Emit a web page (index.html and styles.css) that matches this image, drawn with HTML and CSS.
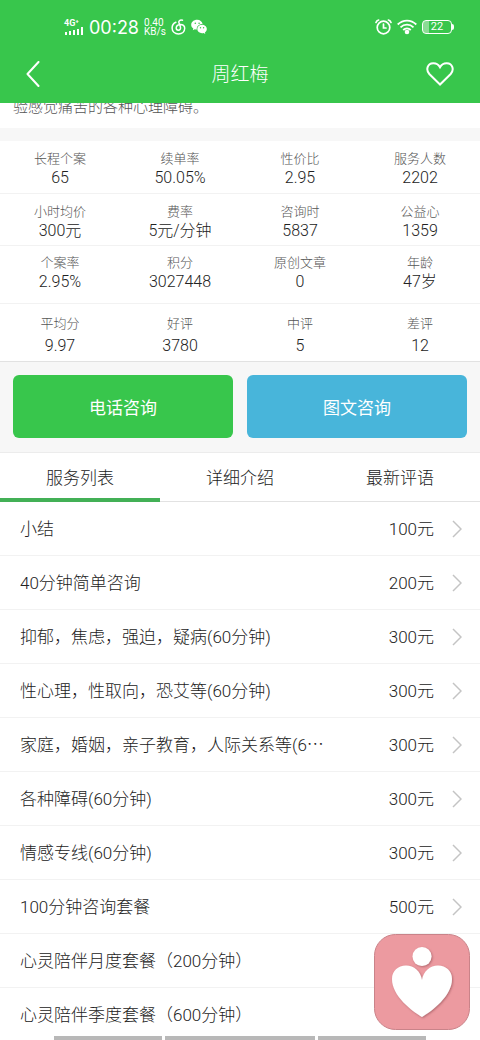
FILE: index.html
```html
<!DOCTYPE html>
<html lang="zh-CN">
<head>
<meta charset="utf-8">
<meta name="viewport" content="width=device-width, initial-scale=1">
<title>周红梅</title>
<link rel="stylesheet" href="styles.css">
</head>
<body>
<div class="app">
  <header class="header">
    <div class="status">
      <div class="status-group">
        <div class="signal">
          <span class="signal-type">4G⁺</span>
          <svg width="20" height="8" viewBox="0 0 20 8" fill="#fff" aria-hidden="true"><rect x="1" y="5" width="2" height="3"/><rect x="5" y="4" width="2" height="4"/><rect x="9" y="3" width="2" height="5"/><rect x="13" y="2" width="2" height="6"/><rect x="17" y="0" width="2" height="8"/></svg>
        </div>
        <span class="clock">00:28</span>
        <div class="speed"><span>0.40</span><span>KB/s</span></div>
        <svg width="15" height="16" viewBox="0 0 15 16" fill="none" stroke="#fff" stroke-width="1.500" stroke-linecap="round" aria-hidden="true"><path d="M11.500 1.300C10 .6 8 1.200 7.800 2.900C7.700 4.200 9.300 6.300 9.500 8.500C9.700 10.300 8.800 11.300 7.400 11.300C6.100 11.300 5.200 10.400 5.200 9.100C5.200 7.100 7 5.600 9.200 5.400C11.900 5.200 13.700 7 13.700 9.300C13.700 12.600 11 14.900 7.500 14.900C3.800 14.900 1.100 12.400 1.100 9C1.100 6.300 2.500 4.200 4.900 3.200"/></svg>
        <svg width="16" height="16" viewBox="0 0 16 16" aria-hidden="true"><path fill="#fff" d="M6.200.8C2.800.8.200 3 .2 5.800c0 1.600.8 2.900 2.100 3.800l-.5 1.700 2-1c.7.200 1.300.3 2 .3-.6-3.200 2-5.700 5.800-5.700C11.100 2.500 8.900.8 6.200.8z"/><path fill="#fff" d="M15.800 10c0-2.300-2.200-4.200-4.800-4.200S6.300 7.700 6.300 10s2.100 4.200 4.700 4.200c.6 0 1.100-.1 1.600-.2l1.700.9-.4-1.500c1.200-.8 1.900-2 1.900-3.400z"/><g fill="#38c64c"><circle cx="4.300" cy="4.200" r=".8"/><circle cx="8.100" cy="4.200" r=".8"/><circle cx="9.500" cy="8.800" r=".7"/><circle cx="12.600" cy="8.800" r=".7"/></g></svg>
      </div>
      <div class="status-group">
        <svg width="17" height="16" viewBox="0 0 17 16" fill="none" stroke="#fff" stroke-width="1.700" stroke-linecap="round" aria-hidden="true"><circle cx="8.500" cy="8.500" r="6.300"/><path d="M8.500 5v4H11M1 3.500C1.400 2.300 2.400 1.300 3.600 1M16 3.500C15.600 2.300 14.600 1.300 13.400 1"/></svg>
        <svg width="20" height="16" viewBox="0 0 20 16" fill="none" stroke="#fff" stroke-width="1.800" aria-hidden="true"><path d="M.7 5.500C6 .2 14 .2 19.300 5.500M3.500 8.300C7.200 4.700 12.800 4.700 16.500 8.300M6.200 11C8.400 8.900 11.600 8.900 13.800 11"/><circle cx="10" cy="13" r="2.300" fill="#fff" stroke="none"/></svg>
        <div class="battery"><span class="battery-body">22</span><span class="battery-tip"></span></div>
      </div>
    </div>
    <div class="nav">
      <button class="nav-button" type="button" aria-label="返回"><svg width="14" height="26" viewBox="0 0 14 26" fill="none" stroke="#fff" stroke-width="2" stroke-linecap="round" stroke-linejoin="round"><path d="M12.500 1L1.500 13L12.500 25"/></svg></button>
      <h1 class="title">周红梅</h1>
      <button class="nav-button" type="button" aria-label="收藏"><svg width="28" height="24" viewBox="0 0 28 24" fill="none" stroke="#fff" stroke-width="2"><path d="M14 22.500L3.300 12C-.4 7.900 1.300 1.400 7.200 1.200C10.300 1.100 12.600 2.600 14 5.200C15.400 2.600 17.700 1.100 20.800 1.200C26.700 1.400 28.400 7.900 24.700 12Z"/></svg></button>
    </div>
  </header>

  <main class="content">
    <section class="intro"><p class="intro-text">验感觉痛苦的各种心理障碍。</p></section>

    <section class="stats">
      <dl class="stat-row">
        <div><dt>长程个案</dt><dd>65</dd></div>
        <div><dt>续单率</dt><dd>50.05%</dd></div>
        <div><dt>性价比</dt><dd>2.95</dd></div>
        <div><dt>服务人数</dt><dd>2202</dd></div>
      </dl>
      <dl class="stat-row stat-row-compact">
        <div><dt>小时均价</dt><dd>300元</dd></div>
        <div><dt>费率</dt><dd>5元/分钟</dd></div>
        <div><dt>咨询时</dt><dd>5837</dd></div>
        <div><dt>公益心</dt><dd>1359</dd></div>
      </dl>
      <dl class="stat-row stat-row-deep">
        <div><dt>个案率</dt><dd>2.95%</dd></div>
        <div><dt>积分</dt><dd>3027448</dd></div>
        <div><dt>原创文章</dt><dd>0</dd></div>
        <div><dt>年龄</dt><dd>47岁</dd></div>
      </dl>
      <dl class="stat-row stat-row-rating">
        <div><dt>平均分</dt><dd>9.97</dd></div>
        <div><dt>好评</dt><dd>3780</dd></div>
        <div><dt>中评</dt><dd>5</dd></div>
        <div><dt>差评</dt><dd>12</dd></div>
      </dl>
    </section>

    <div class="actions">
      <button class="action action-call" type="button">电话咨询</button>
      <button class="action action-text" type="button">图文咨询</button>
    </div>

    <div class="tabs" role="tablist">
      <button class="tab tab-active" type="button" role="tab" aria-selected="true">服务列表</button>
      <button class="tab" type="button" role="tab" aria-selected="false">详细介绍</button>
      <button class="tab" type="button" role="tab" aria-selected="false">最新评语</button>
    </div>

    <ul class="services">
      <li><a class="service" href="#"><span class="name">小结</span><span class="price">100元</span><svg class="chevron" viewBox="0 0 10 18"><path d="M1 1L9 9L1 17"/></svg></a></li>
      <li><a class="service" href="#"><span class="name">40分钟简单咨询</span><span class="price">200元</span><svg class="chevron" viewBox="0 0 10 18"><path d="M1 1L9 9L1 17"/></svg></a></li>
      <li><a class="service" href="#"><span class="name">抑郁，焦虑，强迫，疑病(60分钟)</span><span class="price">300元</span><svg class="chevron" viewBox="0 0 10 18"><path d="M1 1L9 9L1 17"/></svg></a></li>
      <li><a class="service" href="#"><span class="name">性心理，性取向，恐艾等(60分钟)</span><span class="price">300元</span><svg class="chevron" viewBox="0 0 10 18"><path d="M1 1L9 9L1 17"/></svg></a></li>
      <li><a class="service" href="#"><span class="name">家庭，婚姻，亲子教育，人际关系等(6<span class="more">…</span></span><span class="price">300元</span><svg class="chevron" viewBox="0 0 10 18"><path d="M1 1L9 9L1 17"/></svg></a></li>
      <li><a class="service" href="#"><span class="name">各种障碍(60分钟)</span><span class="price">300元</span><svg class="chevron" viewBox="0 0 10 18"><path d="M1 1L9 9L1 17"/></svg></a></li>
      <li><a class="service" href="#"><span class="name">情感专线(60分钟)</span><span class="price">300元</span><svg class="chevron" viewBox="0 0 10 18"><path d="M1 1L9 9L1 17"/></svg></a></li>
      <li><a class="service" href="#"><span class="name">100分钟咨询套餐</span><span class="price">500元</span><svg class="chevron" viewBox="0 0 10 18"><path d="M1 1L9 9L1 17"/></svg></a></li>
      <li><a class="service" href="#"><span class="name">心灵陪伴月度套餐（200分钟）</span></a></li>
      <li><a class="service" href="#"><span class="name">心灵陪伴季度套餐（600分钟）</span></a></li>
    </ul>
  </main>

  <button class="float" type="button" aria-label="心理咨询">
    <svg width="96" height="96" viewBox="0 0 96 96">
      <defs><filter id="shade" x="-20%" y="-20%" width="140%" height="140%"><feDropShadow dx="1" dy="1" stdDeviation="1" flood-color="#8c4a50" flood-opacity=".6"/></filter></defs>
      <rect x=".5" y=".5" width="95" height="95" rx="21" fill="#ec9aa0" stroke="#c98389"/>
      <g fill="#fff" filter="url(#shade)"><circle cx="48" cy="22.500" r="9.500"/><path d="M48 83C38 77 18 62 18 45C18 37 24 31.500 32 31.500C40 31.500 46.500 37 48 46C49.500 37 56 31.500 64 31.500C72 31.500 78 37 78 45C78 62 58 77 48 83Z"/></g>
    </svg>
  </button>
  <div class="gesture" aria-hidden="true"><span></span><span class="gesture-home"></span><span></span></div>
</div>
</body>
</html>
```
FILE: styles.css
```css
* { box-sizing: border-box; }

body,
h1,
p,
dl,
dd,
ul {
  margin: 0;
  padding: 0;
}

body {
  font-family: Roboto, "Noto Sans CJK SC", sans-serif;
  font-weight: 300;
  color: #222;
  background: #fff;
}

button {
  border: 0;
  padding: 0;
  background: none;
  font: inherit;
  color: inherit;
}

svg { display: block; flex: none; }

.app {
  display: flex;
  flex-direction: column;
  height: 100vh;
  overflow: hidden;
}

/* Header */
.header {
  flex: none;
  background: #38c64c;
  color: #fff;
}

.status {
  display: flex;
  justify-content: space-between;
  align-items: center;
  height: 44px;
  padding: 10px 26px 0 64px;
  font-weight: 400;
}

.status-group {
  display: flex;
  align-items: center;
  gap: 5px;
}

.signal-type {
  display: block;
  font-size: 9px;
  line-height: 8px;
  font-weight: 700;
}

.clock {
  padding-top: 2px;
  font-family: Inter, sans-serif;
  font-size: 18px;
  line-height: 20px;
}

.speed {
  display: flex;
  flex-direction: column;
  font-size: 10px;
  line-height: 9px;
}

.battery { display: flex; align-items: center; }

.battery-body {
  width: 30px;
  height: 14px;
  border: 1px solid #fff;
  border-radius: 4px;
  background: linear-gradient(90deg, #8bdc94 22%, transparent 22%);
  font-size: 11px;
  line-height: 12px;
  text-align: center;
}

.battery-tip {
  width: 2px;
  height: 6px;
  border-radius: 0 2px 2px 0;
  background: #fff;
}

.nav {
  display: flex;
  justify-content: space-between;
  align-items: center;
  height: 59px;
  padding: 0 26px;
}

.nav-button { display: flex; width: 28px; }

.title {
  padding-top: 2px;
  font-size: 19px;
  line-height: 28px;
  font-weight: 300;
}

/* Scrolling content */
.content {
  flex: 1;
  min-height: 0;
  overflow-y: auto;
  scrollbar-width: none;
}

.intro {
  display: flex;
  align-items: flex-end;
  height: 25px;
  padding: 0 13px 10px;
  overflow: hidden;
}

.intro-text {
  font-size: 15px;
  line-height: 22px;
  color: #555;
}

.stats { border-top: 13px solid #f7f7f7; }

.stat-row {
  display: grid;
  grid-template-columns: repeat(4, 1fr);
  padding: 9px 0 5px;
  border-bottom: 1px solid #f2f2f2;
  text-align: center;
}

.stat-row-compact { padding-bottom: 4px; }
.stat-row-deep { padding: 8px 0 11px; }

.stat-row-rating {
  padding: 11px 0 5px;
  border-color: #e2e2e2;
}

.stat-row dt {
  font-size: 13px;
  line-height: 18px;
  color: #555;
}

.stat-row dd {
  font-size: 16px;
  line-height: 20px;
  color: #222;
}

.stat-row-rating dt { margin-bottom: 3px; }

.actions {
  display: grid;
  grid-template-columns: 1fr 1fr;
  gap: 14px;
  padding: 13px 13px 14px;
  border-bottom: 1px solid #ececec;
  background: #f7f7f7;
}

.action {
  height: 63px;
  border-radius: 6px;
  font-size: 17px;
  font-weight: 400;
  color: #fff;
}

.action-call { background: #38c64c; }
.action-text { background: #48b5da; }

.tabs {
  display: grid;
  grid-template-columns: repeat(3, 1fr);
  border-bottom: 1px solid #e2e2e2;
}

.tab {
  height: 49px;
  margin-bottom: -1px;
  padding-top: 5px;
  border-bottom: 4px solid transparent;
  font-size: 17px;
  line-height: 24px;
}

.tab-active { border-color: #43b056; }

/* Services */
.services { list-style: none; }

.service {
  display: flex;
  align-items: center;
  height: 54px;
  padding: 0 18px 0 20px;
  border-bottom: 1px solid #f2f2f2;
  font-size: 17px;
  line-height: 24px;
  color: #222;
  text-decoration: none;
}

.name {
  flex: 1;
  min-width: 0;
  overflow: hidden;
  white-space: nowrap;
}

.more { font-family: "Noto Sans CJK SC", sans-serif; }

.price { margin-right: 18px; }

.chevron {
  width: 10px;
  height: 18px;
  fill: none;
  stroke: #c4c4c4;
  stroke-width: 1.5;
}

/* Overlays */
.float {
  position: fixed;
  right: 10px;
  bottom: 10px;
}

.gesture {
  position: fixed;
  bottom: 0;
  left: 0;
  right: 0;
  display: flex;
  justify-content: center;
  gap: 3px;
}

.gesture span {
  width: 108px;
  height: 4px;
  background: #b8b8b8;
}

.gesture .gesture-home { width: 150px; }
```
